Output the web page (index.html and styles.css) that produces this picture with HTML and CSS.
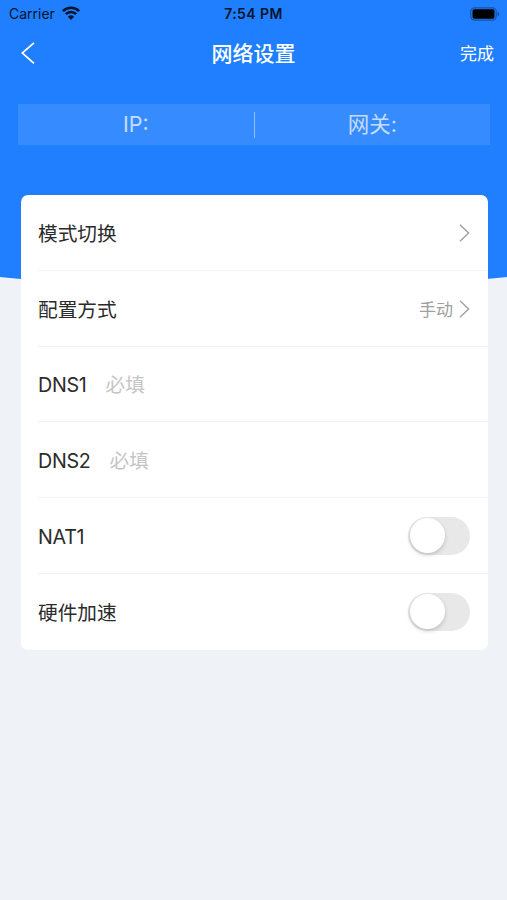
FILE: index.html
```html
<!DOCTYPE html>
<html lang="zh-CN">

<head>
    <meta charset="UTF-8">
    <title>网络设置</title>
    <link rel="stylesheet" href="styles.css">
</head>

<body>
    <div class="header">
        <div class="status">
            <div class="carrier">
                <span>Carrier</span>
                <svg class="wifi" width="18" height="14" viewBox="0 0 18 14">
                    <path d="M.9 5.1a11.6 11.6 0 0 1 16.2 0M3.8 8.1a7.4 7.4 0 0 1 10.4 0" fill="none" stroke="#06142b" stroke-width="2.6" />
                    <path d="M9 14L5.9 10.8a4.5 4.5 0 0 1 6.2 0z" fill="#06142b" />
                </svg>
            </div>
            <span class="time">7:54 PM</span>
            <svg class="battery" width="30" height="14" viewBox="0 0 30 14">
                <rect x="0.8" y="0.8" width="25.4" height="12.4" rx="3.6" fill="none" stroke="#1552a8" stroke-width="1.2" />
                <rect x="2.5" y="2.3" width="22" height="9.4" rx="1.6" fill="#000" />
                <path d="M27.6 4.8v4.4q1.9-.8 1.9-2.2t-1.9-2.2z" fill="#1552a8" />
            </svg>
        </div>
        <div class="nav">
            <svg class="back" width="14" height="22" viewBox="0 0 14 22">
                <path d="M13 .8L1.2 11L13 21.4" fill="none" stroke="#fff" stroke-width="1.7" />
            </svg>
            <h1>网络设置</h1>
            <span class="done">完成</span>
        </div>
        <div class="info">
            <div class="info-item">IP:</div>
            <div class="line"></div>
            <div class="info-item">网关:</div>
        </div>
    </div>

    <div class="card">
        <div class="row">
            <label>模式切换</label>
            <svg class="arrow" width="11" height="18" viewBox="0 0 11 18">
                <path d="M1 .8L9.6 9L1 17.2" fill="none" stroke="#a3a3a3" stroke-width="1.5" />
            </svg>
        </div>
        <div class="row">
            <label>配置方式</label>
            <span class="value">手动</span>
            <svg class="arrow" width="11" height="18" viewBox="0 0 11 18">
                <path d="M1 .8L9.6 9L1 17.2" fill="none" stroke="#a3a3a3" stroke-width="1.5" />
            </svg>
        </div>
        <div class="row">
            <label class="en">DNS1</label>
            <input type="text" placeholder="必填">
        </div>
        <div class="row">
            <label class="en">DNS2</label>
            <input type="text" placeholder="必填">
        </div>
        <div class="row">
            <label class="en">NAT1</label>
            <div class="switch"></div>
        </div>
        <div class="row">
            <label>硬件加速</label>
            <div class="switch"></div>
        </div>
    </div>
</body>

</html>
```

FILE: styles.css
```css
* {
    box-sizing: border-box;
}

body {
    margin: 0;
    min-height: 900px;
    background: #eff3f8;
    font-family: Inter, "Noto Sans CJK SC", sans-serif;
    color: #2b2b2b;
}

.header {
    height: 290px;
    background: #207fff;
    /* 底部弧形 */
    clip-path: ellipse(857px 290px at 50% 0);
}

.status {
    display: grid;
    grid-template-columns: 1fr auto 1fr;
    align-items: center;
    height: 27px;
    padding: 0 7px 0 9px;
    font-size: 14px;
    color: #06142b;
}

.carrier {
    display: flex;
    align-items: center;
    gap: 7px;
}

.wifi {
    margin-top: -2px;
}

.time {
    margin-left: -2px;
    font-size: 14px;
    font-weight: 600;
    letter-spacing: 0.4px;
}

.battery {
    justify-self: end;
}

.nav {
    display: grid;
    grid-template-columns: 1fr auto 1fr;
    align-items: center;
    height: 51px;
    padding: 0 13px 0 21px;
    color: #fff;
}

.nav h1 {
    margin: -2px 0 0 -8px;
    font-size: 21px;
    font-weight: 500;
}

.done {
    justify-self: end;
    margin-top: -1px;
    font-size: 17px;
}

.info {
    display: flex;
    align-items: center;
    height: 41px;
    margin: 26px 17px 0 18px;
    background: #368cff;
    font-size: 21.5px;
    line-height: 41px;
    color: #c4ddff;
}

.info-item {
    flex: 1;
    height: 41px;
    text-align: center;
}

.line {
    width: 1px;
    height: 26px;
    background: #8fc0ff;
}

.card {
    position: relative;
    height: 455px;
    margin: -95px 19.5px 0 20.5px;
    padding-left: 17.5px;
    background: #fff;
    border-radius: 7px;
}

.row {
    display: flex;
    align-items: center;
    height: 75.8px;
    padding-right: 17.5px;
    border-bottom: 1px solid #f3f3f3;
    font-size: 19.7px;
}

.row:last-child {
    border-bottom: none;
}

.row label {
    margin-right: auto;
}

.row .en {
    padding-top: 2px;
    letter-spacing: -0.3px;
}

.row input {
    flex: 1;
    min-width: 0;
    margin-left: 19px;
    padding: 2px 0 0;
    border: none;
    outline: none;
    background: none;
    font: inherit;
}

.row input::placeholder {
    color: #c5c5c5;
}

.arrow {
    margin-top: 2px;
}

.value {
    margin-right: 6px;
    font-size: 17px;
    color: #a0a0a0;
}

.switch {
    width: 62px;
    height: 38px;
    padding: 1.5px;
    background: #e8e8e9;
    border-radius: 19px;
}

.switch::before {
    content: "";
    display: block;
    width: 35px;
    height: 35px;
    background: #fff;
    border-radius: 50%;
    box-shadow: 0 2px 4px rgba(0, 0, 0, 0.18);
}
```
